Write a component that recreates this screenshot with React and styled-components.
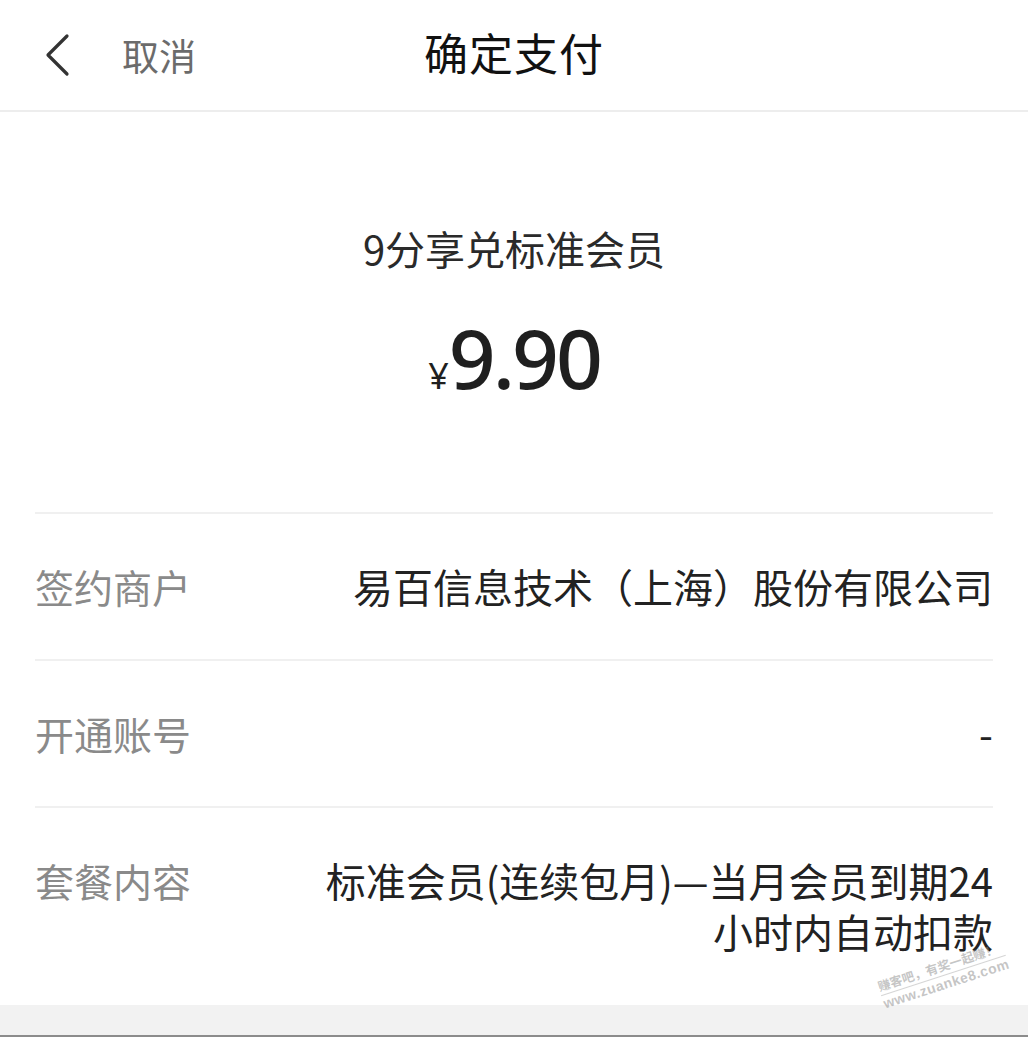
import styled, { createGlobalStyle } from "styled-components";

const GlobalStyle = createGlobalStyle`
  html, body {
    margin: 0;
    padding: 0;
    background: #fff;
  }
  body {
    font-family: "Noto Sans CJK SC", "Noto Sans", sans-serif;
    -webkit-font-smoothing: antialiased;
  }
`;

const Page = styled.div`
  position: relative;
  width: 1028px;
  height: 1037px;
  overflow: hidden;
  background: #fff;
  display: flex;
  flex-direction: column;
`;

const Header = styled.header`
  position: relative;
  height: 112px;
  flex-shrink: 0;
  display: flex;
  align-items: center;
  border-bottom: 2px solid #ededed;
  box-sizing: border-box;
  padding-left: 42px;
`;

const Back = styled.button`
  display: flex;
  align-items: center;
  gap: 48px;
  background: none;
  border: none;
  padding: 0;
  font-family: inherit;
  font-size: 37px;
  color: #6b6b6b;
  line-height: 1;
  & svg {
    width: 32px;
    height: 44px;
  }
`;

const Title = styled.h1`
  position: absolute;
  left: 0;
  right: 0;
  top: 26px;
  margin: 0 auto;
  width: max-content;
  font-size: 44px;
  font-weight: 400;
  color: #111;
  letter-spacing: 1px;
  line-height: 52px;
`;

const Summary = styled.section`
  display: flex;
  flex-direction: column;
  align-items: center;
  padding-top: 110px;
  height: 400px;
  box-sizing: border-box;
  flex-shrink: 0;
`;

const Product = styled.div`
  font-size: 40px;
  color: #2a2a2a;
  line-height: 52px;
`;

const Amount = styled.div`
  margin-top: 42px;
  display: flex;
  align-items: baseline;
  color: #1f1f1f;
  font-family: "Noto Sans", "Open Sans", sans-serif;
  & span:first-child {
    font-size: 36px;
    margin-right: 0;
  }
  & span:last-child {
    font-size: 82px;
    font-weight: 500;
    line-height: 82px;
    letter-spacing: -3px;
  }
`;

const List = styled.div`
  margin: 0 35px;
`;

const Row = styled.div`
  display: flex;
  justify-content: space-between;
  align-items: flex-start;
  padding: 47px 0;
  border-top: 2px solid #f0f0f0;
`;

const Label = styled.div`
  font-size: 39px;
  line-height: 50px;
  color: #8a8a8a;
  white-space: nowrap;
  flex-shrink: 0;
`;

const Value = styled.div`
  font-size: 40px;
  line-height: 51px;
  color: #222;
  text-align: right;
  max-width: ${({ $wide }) => ($wide ? "700px" : "680px")};
  white-space: ${({ $wide }) => ($wide ? "nowrap" : "normal")};
`;

const Footer = styled.div`
  margin-top: auto;
  height: 30px;
  background: #f2f2f2;
  border-bottom: 2px solid #8c8c8c;
  flex-shrink: 0;
`;

const Watermark = styled.div`
  position: absolute;
  left: 876px;
  top: 980px;
  transform: rotate(-18deg);
  transform-origin: 0 0;
  font-family: "Liberation Sans", "Noto Sans CJK SC", sans-serif;
  color: rgba(140, 140, 140, 0.5);
  font-size: 12.5px;
  font-weight: 700;
  line-height: 16px;
  white-space: nowrap;
  & div:first-child {
    border-bottom: 1px solid rgba(150, 150, 150, 0.4);
  }
  & div:last-child {
    font-size: 14px;
    letter-spacing: 0.5px;
  }
`;

const rows = [
  { label: "签约商户", value: "易百信息技术（上海）股份有限公司", wide: true },
  { label: "开通账号", value: "-" },
  {
    label: "套餐内容",
    value: "标准会员(连续包月)—当月会员到期24小时内自动扣款",
  },
];

export default function App() {
  return (
    <Page>
      <GlobalStyle />
      <Header>
        <Back>
          <svg viewBox="0 0 32 44" fill="none">
            <path
              d="M25 3 L6 22 L25 41"
              stroke="#333"
              strokeWidth="3.2"
              strokeLinecap="round"
              strokeLinejoin="round"
            />
          </svg>
          取消
        </Back>
        <Title>确定支付</Title>
      </Header>
      <Summary>
        <Product>9分享兑标准会员</Product>
        <Amount>
          <span>¥</span>
          <span>9.90</span>
        </Amount>
      </Summary>
      <List>
        {rows.map((r) => (
          <Row key={r.label}>
            <Label>{r.label}</Label>
            <Value $wide={r.wide}>{r.value}</Value>
          </Row>
        ))}
      </List>
      <Footer />
      <Watermark>
        <div>赚客吧，有奖一起赚！</div>
        <div>www.zuanke8.com</div>
      </Watermark>
    </Page>
  );
}
